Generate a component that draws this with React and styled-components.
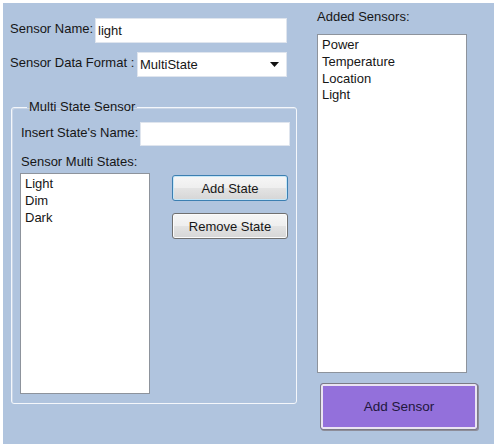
import React from "react";
import styled, { createGlobalStyle } from "styled-components";

const Global = createGlobalStyle`
  html, body { margin: 0; padding: 0; background: #ffffff; }
  body { font-family: "Liberation Sans", Arial, sans-serif; }
`;

const Window = styled.div`
  box-sizing: border-box;
  width: 494px;
  height: 444px;
  background: #b0c4de;
  border-top: 3px solid #ffffff;
  border-left: 3px solid #ffffff;
  display: flex;
  padding-left: 7px;
  gap: 20px;
  font-size: 13px;
  color: #161616;
`;

const LeftColumn = styled.div`
  width: 287px;
  display: flex;
  flex-direction: column;
  padding-top: 15px;
`;

const RightColumn = styled.div`
  width: 161px;
  display: flex;
  flex-direction: column;
  padding-top: 9px;
`;

const FieldRow = styled.div`
  display: flex;
  align-items: center;
  width: 277px;
  height: 25px;
  margin-top: ${(p) => p.$gap || 0}px;
`;

const Label = styled.span`
  white-space: nowrap;
  line-height: 16px;
  margin-top: -3px;
  margin-left: ${(p) => p.$indent || 0}px;
`;

const TextBox = styled.div`
  box-sizing: border-box;
  width: ${(p) => p.$width}px;
  height: ${(p) => p.$height || 25}px;
  margin-left: auto;
  background: #ffffff;
  border: 1px solid #dfe5ee;
  padding: 4px 2px 0;
  line-height: 16px;
  white-space: nowrap;
`;

const Combo = styled(TextBox)`
  display: flex;
  align-items: center;
  justify-content: space-between;
  padding: 0 7px 0 2px;
`;

const Arrow = styled.svg`
  width: 9px;
  height: 5px;
  display: block;
`;

const GroupBox = styled.fieldset`
  box-sizing: border-box;
  margin: 23px 0 0 1px;
  width: 286px;
  padding: 8px 6px 9px 8px;
  border: 1px solid #f4f7fb;
  border-radius: 3px;
  box-shadow: inset 1px 1px 0 #c9d5e6;
  display: flex;
  flex-direction: column;
`;

const Caption = styled.legend`
  padding: 0 2px;
  margin-left: 7px;
  line-height: 14px;
`;

const InsertRow = styled.div`
  display: flex;
  align-items: center;
  height: 24px;
`;

const ListCaption = styled.div`
  line-height: 15px;
  margin: 8px 0 0 1px;
`;

const ListArea = styled.div`
  display: flex;
  gap: 22px;
  margin-top: 4px;
`;

const ListBox = styled.ul`
  box-sizing: border-box;
  list-style: none;
  margin: ${(p) => p.$top || 0}px 0 0;
  padding: 2px 4px;
  width: ${(p) => p.$width}px;
  height: ${(p) => p.$height}px;
  background: #ffffff;
  border: 1px solid #8d939c;
`;

const ListItem = styled.li`
  line-height: 16.8px;
  white-space: nowrap;
`;

const ButtonStack = styled.div`
  display: flex;
  flex-direction: column;
  gap: 12px;
  padding-top: 2px;
`;

const PushButton = styled.button`
  box-sizing: border-box;
  width: 116px;
  height: 26px;
  font: inherit;
  color: #161616;
  border-radius: 3px;
  border: 1px solid ${(p) => (p.$focused ? "#3c7fb1" : "#707070")};
  box-shadow: ${(p) =>
    p.$focused ? "inset 0 0 0 1px #c6e7f8" : "inset 0 0 0 1px #fbfbfb"};
  background: linear-gradient(#f6f6f6 0%, #efefef 48%, #e3e3e3 52%, #d6d6d6 100%);
  padding: 0;
`;

const SensorButton = styled.button`
  box-sizing: border-box;
  width: 158px;
  height: 47px;
  margin: 10px 0 0 3px;
  font: inherit;
  font-size: 13.5px;
  color: #22173d;
  background: #9370db;
  border: 1px solid #7b7b86;
  border-radius: 3px;
  box-shadow: inset 0 0 0 2px #e9e4f2, 1px 1px 0 #8d8d99;
  padding: 0;
`;

export default function App() {
  const states = ["Light", "Dim", "Dark"];
  const sensors = ["Power", "Temperature", "Location", "Light"];

  return (
    <>
      <Global />
      <Window>
        <LeftColumn>
          <FieldRow>
            <Label>Sensor Name:</Label>
            <TextBox $width={192}>light</TextBox>
          </FieldRow>
          <FieldRow $gap={9}>
            <Label>Sensor Data Format :</Label>
            <Combo $width={150}>
              <span>MultiState</span>
              <Arrow viewBox="0 0 9 5">
                <path d="M0 0 H9 L4.5 5 Z" fill="#111" />
              </Arrow>
            </Combo>
          </FieldRow>

          <GroupBox>
            <Caption>Multi State Sensor</Caption>
            <InsertRow>
              <Label $indent={1}>Insert State's Name:</Label>
              <TextBox $width={150} $height={24} />
            </InsertRow>
            <ListCaption>Sensor Multi States:</ListCaption>
            <ListArea>
              <ListBox $width={130} $height={221}>
                {states.map((s) => (
                  <ListItem key={s}>{s}</ListItem>
                ))}
              </ListBox>
              <ButtonStack>
                <PushButton $focused>Add State</PushButton>
                <PushButton>Remove State</PushButton>
              </ButtonStack>
            </ListArea>
          </GroupBox>
        </LeftColumn>

        <RightColumn>
          <Label>Added Sensors:</Label>
          <ListBox $width={150} $height={339} $top={9}>
            {sensors.map((s) => (
              <ListItem key={s}>{s}</ListItem>
            ))}
          </ListBox>
          <SensorButton>Add Sensor</SensorButton>
        </RightColumn>
      </Window>
    </>
  );
}
